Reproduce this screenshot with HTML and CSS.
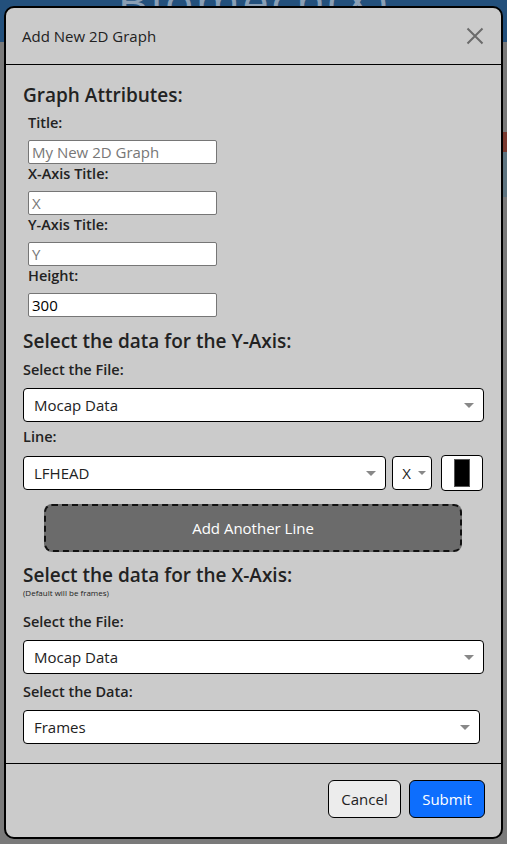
FILE: index.html
```html
<!DOCTYPE html>
<html>
<head>
<meta charset="utf-8">
<link rel="stylesheet" href="styles.css">
</head>
<body>
<div class="app-header"><span class="brand">Biomech(X)</span></div>
<div class="app-side"><span class="side-a"></span><span class="side-b"></span></div>

<div class="modal">
  <div class="modal-header">
    <span class="modal-title">Add New 2D Graph</span>
    <svg class="close" width="18" height="18" viewBox="0 0 18 18"><path d="M1.5 1.5 L16.5 16.5 M16.5 1.5 L1.5 16.5" stroke="#6b6b6b" stroke-width="2" fill="none"/></svg>
  </div>
  <div class="modal-body">
    <h2 class="section">Graph Attributes:</h2>
    <div class="attrs">
      <label class="lbl">Title:</label>
      <div class="input placeholder">My New 2D Graph</div>
      <label class="lbl">X-Axis Title:</label>
      <div class="input placeholder">X</div>
      <label class="lbl">Y-Axis Title:</label>
      <div class="input placeholder">Y</div>
      <label class="lbl">Height:</label>
      <div class="input">300</div>
    </div>

    <h2 class="section sec2">Select the data for the Y-Axis:</h2>
    <label class="lbl2">Select the File:</label>
    <div class="select full"><span>Mocap Data</span><i class="caret"></i></div>
    <label class="lbl2 lbl-line">Line:</label>
    <div class="line-row">
      <div class="select grow"><span>LFHEAD</span><i class="caret"></i></div>
      <div class="select axis"><span>X</span><i class="caret"></i></div>
      <div class="color-btn"><span class="swatch"></span></div>
    </div>
    <div class="add-line">Add Another Line</div>

    <h2 class="section sec3">Select the data for the X-Axis:</h2>
    <div class="note">(Default will be frames)</div>
    <label class="lbl2 lbl-gap">Select the File:</label>
    <div class="select full"><span>Mocap Data</span><i class="caret"></i></div>
    <label class="lbl2 lbl-data">Select the Data:</label>
    <div class="select narrow"><span>Frames</span><i class="caret"></i></div>
  </div>
  <div class="modal-footer">
    <button class="btn cancel">Cancel</button>
    <button class="btn submit">Submit</button>
  </div>
</div>
</body>
</html>
```
FILE: styles.css
```css
* { box-sizing: border-box; }
html, body { margin: 0; padding: 0; }
body {
  width: 507px;
  height: 844px;
  background: #7a7a7a;
  font-family: "Open Sans", "Noto Sans", sans-serif;
  color: #222;
  overflow: hidden;
  position: relative;
}
.app-header {
  height: 42px;
  background: #23507c;
  display: flex;
  justify-content: center;
  overflow: hidden;
}
.brand {
  font-size: 48px;
  line-height: 56px;
  color: #8a9fb5;
  margin-top: -26px;
  letter-spacing: 2px;
}
.app-side {
  display: flex;
  flex-direction: column;
  align-items: flex-end;
  padding-top: 90px;
}
.side-a { width: 4px; height: 20px; background: #7a3a30; }
.side-b { width: 4px; height: 45px; background: #5e7480; }

.modal {
  position: absolute;
  left: 4px;
  top: 6px;
  width: 499px;
  height: 833px;
  background: #cbcbcb;
  border: 2px solid #000;
  border-radius: 10px;
  display: flex;
  flex-direction: column;
}
.modal-header {
  height: 57px;
  border-bottom: 1px solid #000;
  display: flex;
  align-items: center;
  justify-content: space-between;
  padding: 0 17px 0 16px;
}
.modal-title { font-size: 15px; color: #222; }
.close { display: block; }

.modal-body {
  padding: 18px 18px 0 17px;
  flex: 1;
}
.section {
  margin: 0;
  font-size: 19px;
  font-weight: 600;
  line-height: 24px;
  color: #222;
}
.attrs {
  padding-left: 5px;
  display: flex;
  flex-direction: column;
  align-items: flex-start;
  margin-top: 6px;
}
.lbl {
  font-size: 14.5px;
  font-weight: 600;
  line-height: 20px;
  margin-bottom: 7px;
}
.input {
  width: 189px;
  height: 24px;
  background: #fff;
  border: 1px solid #767676;
  border-radius: 2px;
  font-size: 15px;
  line-height: 22px;
  padding: 0 3px;
  color: #000;
}
.input.placeholder { color: #777; }

.sec2 { margin-top: 12px; }
.lbl2 {
  display: block;
  font-size: 14.5px;
  font-weight: 600;
  line-height: 20px;
  margin: 7px 0 8px;
}
.lbl-line { margin-top: 5px; }
.lbl-data { margin-top: 8px; }
.select {
  height: 34px;
  background: #fff;
  border: 1px solid #000;
  border-radius: 4px;
  display: flex;
  align-items: center;
  justify-content: space-between;
  padding: 0 9px 0 10px;
  font-size: 15px;
  color: #222;
}
.full { width: 461px; }
.narrow { width: 457px; }
.caret {
  width: 0; height: 0;
  border-left: 5px solid transparent;
  border-right: 5px solid transparent;
  border-top: 5px solid #888;
}
.line-row {
  display: flex;
  align-items: center;
  gap: 6px;
}
.grow { width: 365px; }
.axis { width: 40px; padding: 0 5px 0 9px; }
.axis .caret { border-left-width: 4px; border-right-width: 4px; border-top-width: 4px; }
.color-btn {
  width: 42px;
  height: 36px;
  margin-left: 3px;
  background: #fff;
  border: 1px solid #000;
  border-radius: 4px;
  display: flex;
  align-items: center;
  justify-content: center;
}
.swatch {
  width: 16px;
  height: 28px;
  background: #000;
  border: 1px solid #555;
}
.add-line {
  margin: 13px 21px 0 21px;
  height: 48px;
  background: #6b6b6b;
  border: 2px dashed #111;
  border-radius: 8px;
  color: #fff;
  font-size: 15px;
  display: flex;
  align-items: center;
  justify-content: center;
}
.sec3 { margin-top: 11px; }
.note { font-size: 8px; line-height: 10px; color: #222; margin-top: 1px; }
.lbl-gap { margin-top: 14px; }

.modal-footer {
  height: 74px;
  border-top: 1px solid #000;
  display: flex;
  justify-content: flex-end;
  align-items: flex-start;
  gap: 8px;
  padding: 16px 16px 0 0;
}
.btn {
  height: 38px;
  border-radius: 6px;
  font-family: inherit;
  font-size: 15px;
  padding: 0 12px;
  border: 1px solid #000;
}
.cancel { background: #ececec; color: #222; width: 73px; }
.submit { background: #0d6efd; color: #fff; width: 76px; }
```
